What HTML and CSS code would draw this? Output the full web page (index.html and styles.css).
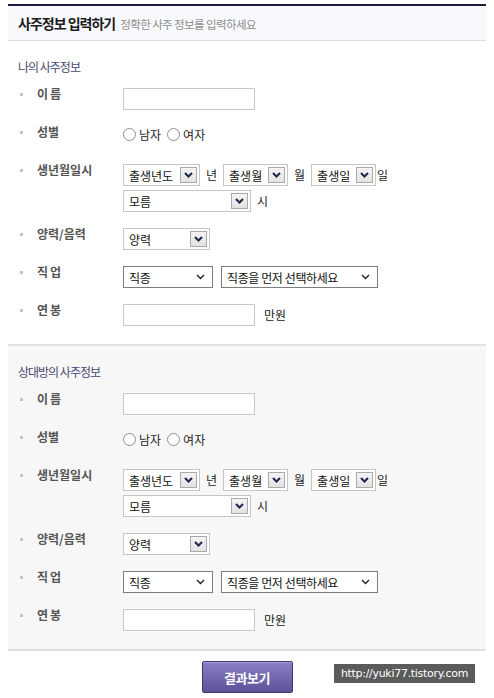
FILE: index.html
```html
<html>
<head>
    <meta charset="utf-8">
    <title>사주정보 입력하기</title>
    <link rel="stylesheet" href="styles.css">
</head>
<body>
  <div class="wrap">
    <div class="head">
      <h2>사주정보 입력하기</h2>
      <span class="sub">정확한 사주 정보를 입력하세요</span>
    </div>

    <div class="sect">
      <h3>나의 사주정보</h3>
      <div class="rows">
        <div class="row">
          <span class="lbl sp">이름</span>
          <span class="inp"></span>
        </div>
        <div class="row">
          <span class="lbl">성별</span>
          <div class="radios">
            <span class="rd"></span><span class="rtx">남자</span>
            <span class="rd"></span><span class="rtx">여자</span>
          </div>
        </div>
        <div class="row">
          <span class="lbl">생년월일시</span>
          <div class="lines">
            <div class="line">
              <span class="sel w-year">출생년도<i class="btn"><svg width="9" height="6" viewBox="0 0 9 6"><polyline points="1,1 4.5,4.5 8,1" /></svg></i></span>
              <span class="unit">년</span>
              <span class="sel w-md">출생월<i class="btn"><svg width="9" height="6" viewBox="0 0 9 6"><polyline points="1,1 4.5,4.5 8,1" /></svg></i></span>
              <span class="unit">월</span>
              <span class="sel w-md">출생일<i class="btn"><svg width="9" height="6" viewBox="0 0 9 6"><polyline points="1,1 4.5,4.5 8,1" /></svg></i></span>
              <span class="unit tight">일</span>
            </div>
            <div class="line">
              <span class="sel w-hour">모름<i class="btn"><svg width="9" height="6" viewBox="0 0 9 6"><polyline points="1,1 4.5,4.5 8,1" /></svg></i></span>
              <span class="unit">시</span>
            </div>
          </div>
        </div>
        <div class="row">
          <span class="lbl">양력/음력</span>
          <span class="sel w-cal">양력<i class="btn"><svg width="9" height="6" viewBox="0 0 9 6"><polyline points="1,1 4.5,4.5 8,1" /></svg></i></span>
        </div>
        <div class="row">
          <span class="lbl sp">직업</span>
          <div class="line">
            <span class="nsel w-job">직종<svg width="9" height="6" viewBox="0 0 9 6"><polyline points="1,1 4.5,4.5 8,1" /></svg></span>
            <span class="nsel w-job2">직종을 먼저 선택하세요<svg width="9" height="6" viewBox="0 0 9 6"><polyline points="1,1 4.5,4.5 8,1" /></svg></span>
          </div>
        </div>
        <div class="row">
          <span class="lbl sp">연봉</span>
          <span class="inp"></span>
          <span class="unit wide">만원</span>
        </div>
      </div>
    </div>

    <div class="sect alt">
      <h3>상대방의 사주정보</h3>
      <div class="rows">
        <div class="row">
          <span class="lbl sp">이름</span>
          <span class="inp"></span>
        </div>
        <div class="row">
          <span class="lbl">성별</span>
          <div class="radios">
            <span class="rd"></span><span class="rtx">남자</span>
            <span class="rd"></span><span class="rtx">여자</span>
          </div>
        </div>
        <div class="row">
          <span class="lbl">생년월일시</span>
          <div class="lines">
            <div class="line">
              <span class="sel w-year">출생년도<i class="btn"><svg width="9" height="6" viewBox="0 0 9 6"><polyline points="1,1 4.5,4.5 8,1" /></svg></i></span>
              <span class="unit">년</span>
              <span class="sel w-md">출생월<i class="btn"><svg width="9" height="6" viewBox="0 0 9 6"><polyline points="1,1 4.5,4.5 8,1" /></svg></i></span>
              <span class="unit">월</span>
              <span class="sel w-md">출생일<i class="btn"><svg width="9" height="6" viewBox="0 0 9 6"><polyline points="1,1 4.5,4.5 8,1" /></svg></i></span>
              <span class="unit tight">일</span>
            </div>
            <div class="line">
              <span class="sel w-hour">모름<i class="btn"><svg width="9" height="6" viewBox="0 0 9 6"><polyline points="1,1 4.5,4.5 8,1" /></svg></i></span>
              <span class="unit">시</span>
            </div>
          </div>
        </div>
        <div class="row">
          <span class="lbl">양력/음력</span>
          <span class="sel w-cal">양력<i class="btn"><svg width="9" height="6" viewBox="0 0 9 6"><polyline points="1,1 4.5,4.5 8,1" /></svg></i></span>
        </div>
        <div class="row">
          <span class="lbl sp">직업</span>
          <div class="line">
            <span class="nsel w-job">직종<svg width="9" height="6" viewBox="0 0 9 6"><polyline points="1,1 4.5,4.5 8,1" /></svg></span>
            <span class="nsel w-job2">직종을 먼저 선택하세요<svg width="9" height="6" viewBox="0 0 9 6"><polyline points="1,1 4.5,4.5 8,1" /></svg></span>
          </div>
        </div>
        <div class="row">
          <span class="lbl sp">연봉</span>
          <span class="inp"></span>
          <span class="unit wide">만원</span>
        </div>
      </div>
    </div>

    <div class="foot">
      <button class="go">결과보기</button>
    </div>
  </div>

  <div class="mark">http://yuki77.tistory.com</div>
</body>
</html>
```

FILE: styles.css
```css
body {
    margin: 0;
    font-family: "Noto Sans CJK KR", "Liberation Sans", sans-serif;
    font-size: 12px;
    color: #222;
    background: #fff;
    position: relative;
}

.wrap {
    width: 478px;
    margin: 4px 8px 0 8px;
}

.head {
    border-top: 2px solid #1f1c3c;
    border-bottom: 1px solid #dcdcdc;
    background: #f8f9fc;
    height: 34px;
    display: flex;
    align-items: center;
    padding-left: 10px;
}

.head h2 {
    margin: 0;
    font-size: 14px;
    font-weight: bold;
    letter-spacing: -1px;
    color: #1b1b1b;
}

.head .sub {
    margin-left: 5px;
    font-size: 11.5px;
    color: #8c8c8c;
    letter-spacing: -0.6px;
    padding-top: 2px;
}

.sect {
    padding: 18px 0 18px 0;
    border-bottom: 2px solid #e2e2e2;
    background: #fff;
}

.sect.alt {
    background: #f7f7f7;
}

.sect h3 {
    margin: 0 0 13px 10px;
    font-size: 12px;
    line-height: 16px;
    font-weight: normal;
    letter-spacing: -1px;
    color: #4b4775;
}

.rows {
    display: flex;
    flex-direction: column;
    gap: 16px;
}

.row {
    display: flex;
    align-items: flex-start;
    min-height: 22px;
}

.lbl {
    width: 115px;
    box-sizing: border-box;
    padding-left: 29px;
    margin-top: -1px;
    line-height: 14px;
    font-weight: bold;
    color: #555;
    position: relative;
}

.lbl.sp {
    letter-spacing: 2px;
}

.lbl::before {
    content: "";
    position: absolute;
    left: 12px;
    top: 6px;
    width: 3px;
    height: 3px;
    background: #c4c4c4;
}

.inp {
    width: 132px;
    height: 22px;
    box-sizing: border-box;
    border: 1px solid #c8c8c8;
    background: #fff;
}

.radios {
    display: flex;
    align-items: center;
    height: 15px;
    margin-top: 1px;
}

.rd {
    width: 13px;
    height: 13px;
    box-sizing: border-box;
    border: 1px solid #8e8e8e;
    border-radius: 50%;
    background: #fff;
}

.rtx {
    margin: 0 6px 0 3px;
    line-height: 15px;
}

.lines {
    display: flex;
    flex-direction: column;
    gap: 4px;
}

.line {
    display: flex;
    align-items: center;
}

.sel, .nsel {
    height: 22px;
    box-sizing: border-box;
    border: 1px solid #c6c6c6;
    background: #fff;
    display: flex;
    align-items: center;
    justify-content: space-between;
    padding-left: 5px;
    color: #111;
}

.sel .btn {
    width: 17px;
    height: 16px;
    box-sizing: border-box;
    margin-right: 2px;
    border: 1px solid #a9a9a9;
    background: linear-gradient(#f4f4f4, #e2e2e2);
    display: flex;
    align-items: center;
    justify-content: center;
}

.sel svg polyline {
    fill: none;
    stroke: #1b2748;
    stroke-width: 2;
}

.nsel {
    border-color: #7d7d7d;
    padding-right: 7px;
    letter-spacing: -0.4px;
}

.nsel svg polyline {
    fill: none;
    stroke: #222;
    stroke-width: 1.4;
}

.w-year { width: 77px; }
.w-md { width: 65px; }
.w-hour { width: 128px; }
.w-cal { width: 87px; }
.w-job { width: 90px; margin-right: 8px; }
.w-job2 { width: 157px; }

.unit {
    margin: 0 6px 0 6px;
    line-height: 22px;
}

.unit.tight {
    margin-left: 1px;
}

.unit.wide {
    margin-left: 9px;
}

.foot {
    display: flex;
    justify-content: center;
    padding-top: 10px;
}

.go {
    width: 91px;
    height: 32px;
    border: 1px solid #3e3873;
    border-radius: 2px;
    background: linear-gradient(#8880c6, #5c5299);
    color: #fff;
    font-family: "Noto Sans CJK KR", sans-serif;
    font-size: 13px;
    font-weight: bold;
    letter-spacing: -0.5px;
    box-shadow: inset 0 1px 0 rgba(255, 255, 255, 0.25);
}

.mark {
    position: absolute;
    left: 334px;
    top: 664px;
    width: 141px;
    height: 19px;
    background: #5b5b5b;
    color: #fff;
    font-family: "DejaVu Sans", sans-serif;
    font-size: 11px;
    line-height: 19px;
    text-align: center;
    letter-spacing: -0.3px;
}
```
